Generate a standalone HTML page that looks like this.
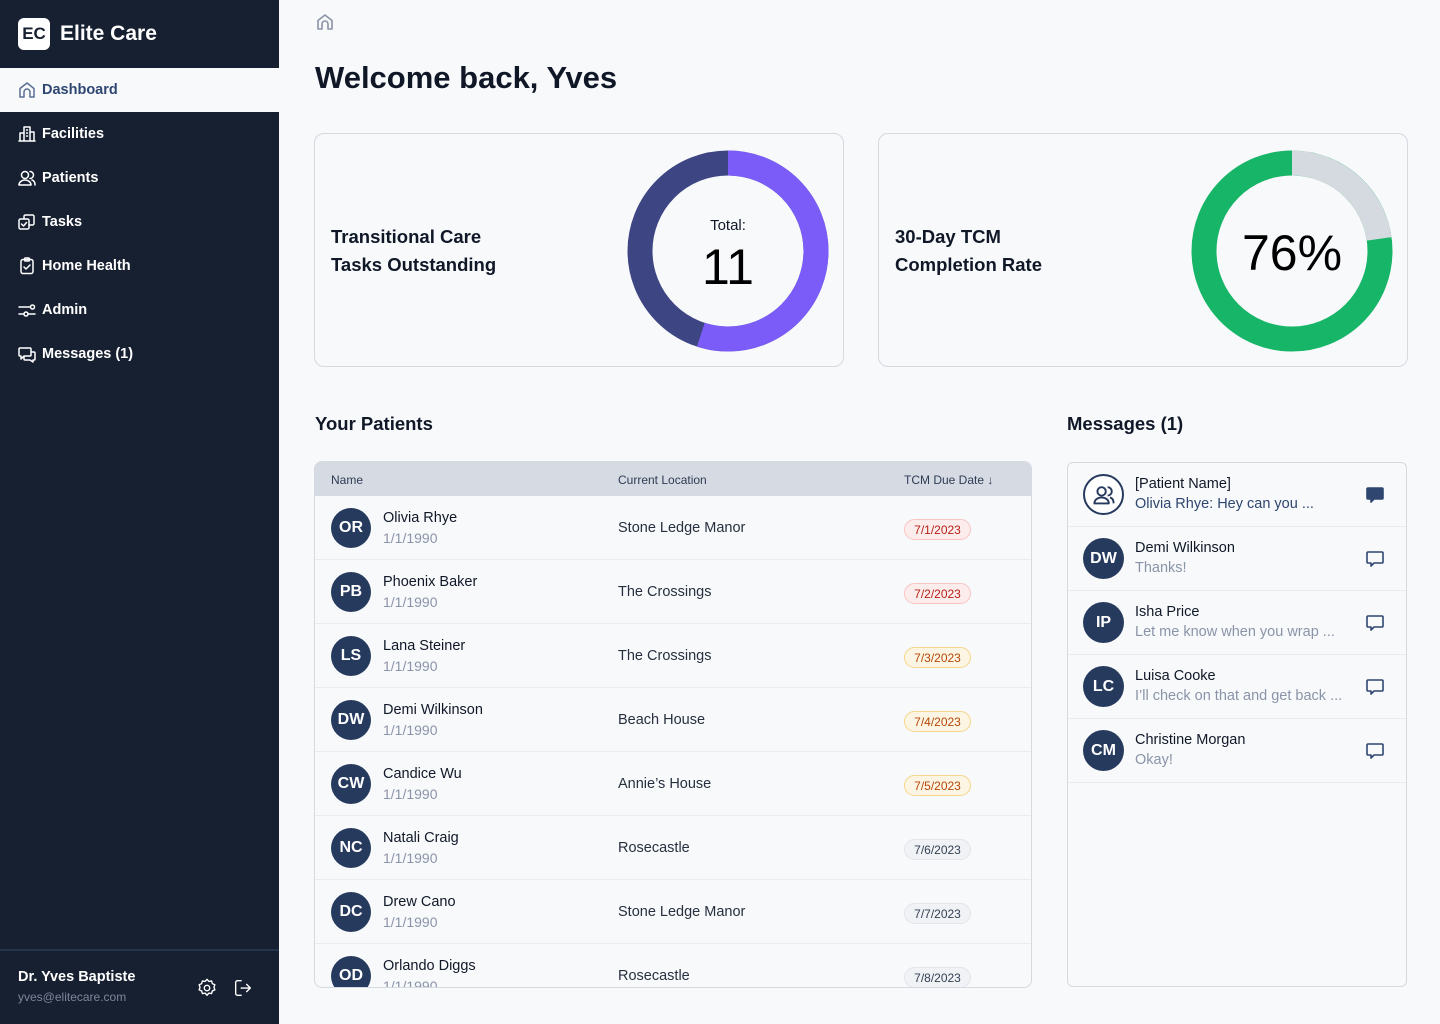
<!DOCTYPE html>
<html><head><meta charset="utf-8"><style>
*{box-sizing:border-box;margin:0;padding:0}
body{width:1440px;height:1024px;overflow:hidden;background:#f8f9fb;font-family:"Liberation Sans",sans-serif;color:#101828;position:relative}
.sb{position:absolute;left:0;top:0;width:279px;height:1024px;background:#172031}
.logo{height:68px;display:flex;align-items:center;padding-left:18px;color:#fff;font-size:21px;font-weight:bold}
.logo .b{width:32px;height:32px;background:#fff;border-radius:6px;color:#172031;font-size:17px;display:flex;align-items:center;justify-content:center;margin-right:10px}
.nav{height:44px;display:flex;align-items:center;padding-left:17px;color:#fff;font-size:14.5px;font-weight:bold}
.nav svg{width:20px;height:20px;margin-right:5px;fill:none;stroke:#fff;stroke-width:1.5;stroke-linecap:round;stroke-linejoin:round}
.nav.act{background:#f8f9fb;color:#2e4670}
.nav.act svg{stroke:#5a6f93}
.foot{position:absolute;left:0;top:949px;width:279px;height:75px;border-top:2px solid #26334d;padding:18px 0 0 18px}
.foot .n{color:#fff;font-size:14.5px;font-weight:bold}
.foot .e{color:#7c879b;font-size:12px;margin-top:5px}
.foot svg{position:absolute;top:26px;width:22px;height:22px;fill:none;stroke:#fff;stroke-width:1.5;stroke-linecap:round;stroke-linejoin:round}
h1{position:absolute;left:315px;top:60px;font-size:31px;font-weight:bold;color:#101828}
.card{position:absolute;top:133px;width:530px;height:234px;border:1px solid #d5d9e0;border-radius:10px;background:#f8f9fb}
.card .t{position:absolute;left:16px;top:89px;font-size:18.5px;font-weight:bold;line-height:28px;color:#101828}
.card svg{position:absolute;top:16px;width:202px;height:202px}
h2{position:absolute;top:413px;font-size:18.5px;font-weight:bold;color:#101828}
.tbl{position:absolute;left:314px;top:461px;width:718px;height:527px;border:1px solid #d5d9e0;border-radius:8px;overflow:hidden;background:#f8f9fb}
.th{height:34px;background:#d6dae2;position:relative;font-size:12px;color:#2e3c55}
.th span,.row span{position:absolute}
.row{height:64px;position:relative;border-bottom:1px solid #eaecf0}
.av{position:absolute;width:40px;height:40px;border-radius:50%;background:#263a5e;color:#fff;font-weight:bold;font-size:16px;display:flex;align-items:center;justify-content:center}
.nm{font-size:14.5px;color:#101828}
.dob{font-size:14px;color:#8a94a8}
.loc{font-size:14.5px;color:#27303f}
.bd{position:absolute;left:589px;top:23px;width:67px;height:21px;border-radius:11px;font-size:12px;display:flex;align-items:center;justify-content:center;border:1px solid}
.r{background:#fdecec;border-color:#f6c5c2;color:#b42318}
.o{background:#fdf5e4;border-color:#f6d68a;color:#b54708}
.g{background:#f0f2f5;border-color:#e2e5ea;color:#344054}
.msg{position:absolute;left:1067px;top:462px;width:340px;height:525px;border:1px solid #d5d9e0;border-radius:6px;background:#f8f9fb;overflow:hidden}
.mr{height:64px;position:relative;border-bottom:1px solid #eaecf0}
.mr .av{left:15px;top:11px;width:41px;height:41px}
.mr .a{position:absolute;left:67px;top:13px;font-size:14.5px;color:#101828}
.mr .b{position:absolute;left:67px;top:33px;font-size:14.5px;color:#8a94a8}
.mr svg{position:absolute;left:297px;top:22px;width:20px;height:20px;fill:none;stroke:#2e4670;stroke-width:1.6;stroke-linejoin:round}
</style></head><body>
<div class="sb">
<div class="logo"><div class="b">EC</div>Elite Care</div>
<div class="nav act"><svg viewBox="0 0 20 20"><path d="M3 17V8.5L10 3l7 5.5V17h-4v-5a3 3 0 0 0-6 0v5z"/></svg>Dashboard</div>
<div class="nav"><svg viewBox="0 0 20 20"><path d="M2 17h16M3 17V9h4M7 17V3h6v14M13 8h4v9M9.5 6h1M9.5 9h1M9.5 12h1"/></svg>Facilities</div>
<div class="nav"><svg viewBox="0 0 20 20"><circle cx="8" cy="7" r="3.5"/><path d="M2 17c0-3 3-5 6-5s6 2 6 5zM13 3.5a3.5 3.5 0 0 1 0 7M15 12c2 .5 3 2.5 3 5"/></svg>Patients</div>
<div class="nav"><svg viewBox="0 0 20 20"><rect x="2" y="7" width="10" height="10" rx="1.5"/><path d="M7 7V4.5A1.5 1.5 0 0 1 8.5 3h7A1.5 1.5 0 0 1 17 4.5v7a1.5 1.5 0 0 1-1.5 1.5H12M4.5 12l2 2 3-3.5"/></svg>Tasks</div>
<div class="nav"><svg viewBox="0 0 20 20"><rect x="4" y="3.5" width="12" height="14" rx="2"/><rect x="7.5" y="2" width="5" height="3" rx="1"/><path d="M7 11l2 2 4-4"/></svg>Home Health</div>
<div class="nav"><svg viewBox="0 0 20 20"><path d="M2 7h11M2 14h5"/><circle cx="15.5" cy="7" r="2"/><circle cx="9" cy="14" r="2"/><path d="M11 14h7"/></svg>Admin</div>
<div class="nav"><svg viewBox="0 0 20 20"><path d="M3 4h10a1 1 0 0 1 1 1v6a1 1 0 0 1-1 1H7l-3 3v-3H3a1 1 0 0 1-1-1V5a1 1 0 0 1 1-1zM14 8h3a1 1 0 0 1 1 1v6a1 1 0 0 1-1 1h-1v2l-3-2H8a1 1 0 0 1-1-1v-2"/></svg>Messages (1)</div>
<div class="foot"><div class="n">Dr. Yves Baptiste</div><div class="e">yves@elitecare.com</div>
<svg style="left:196px" viewBox="0 0 24 24"><circle cx="12" cy="12" r="3"/><path d="M12 2.5l2 2.3 3-.5.8 2.9 2.8 1.2-1 2.8 1 2.8-2.8 1.2-.8 2.9-3-.5-2 2.3-2-2.3-3 .5-.8-2.9-2.8-1.2 1-2.8-1-2.8 2.8-1.2.8-2.9 3 .5z"/></svg>
<svg style="left:232px" viewBox="0 0 24 24"><path d="M10 4H6a2 2 0 0 0-2 2v12a2 2 0 0 0 2 2h4M10 12h10M16 8l4 4-4 4"/></svg></div>
</div>
<svg style="position:absolute;left:315px;top:12px;width:20px;height:20px;fill:none;stroke:#8a94a8;stroke-width:1.6;stroke-linejoin:round" viewBox="0 0 20 20"><path d="M3 17V8.5L10 3l7 5.5V17h-4v-5a3 3 0 0 0-6 0v5z"/></svg>
<h1>Welcome back, Yves</h1>
<div class="card" style="left:314px"><div class="t">Transitional Care<br>Tasks Outstanding</div>
<svg style="left:312px" viewBox="0 0 202 202"><circle cx="101" cy="101" r="88" fill="none" stroke="#3d4582" stroke-width="25"/><circle cx="101" cy="101" r="88" fill="none" stroke="#7b5cf8" stroke-width="25" stroke-dasharray="304 600" transform="rotate(-90 101 101)"/><text x="101" y="80" text-anchor="middle" font-size="15" fill="#101828" font-family="Liberation Sans">Total:</text><text x="101" y="134" text-anchor="middle" font-size="50" fill="#000" font-family="Liberation Sans">11</text></svg></div>
<div class="card" style="left:878px"><div class="t">30-Day TCM<br>Completion Rate</div>
<svg style="left:312px" viewBox="0 0 202 202"><circle cx="101" cy="101" r="88" fill="none" stroke="#17b567" stroke-width="25"/><circle cx="101" cy="101" r="88" fill="none" stroke="#d5d9e0" stroke-width="25" stroke-dasharray="126 600" transform="rotate(-90 101 101)"/><text x="101" y="120" text-anchor="middle" font-size="50" fill="#000" font-family="Liberation Sans">76%</text></svg></div>
<h2 style="left:315px">Your Patients</h2>
<h2 style="left:1067px">Messages (1)</h2>
<div class="tbl">
<div class="th"><span style="left:16px;top:11px">Name</span><span style="left:303px;top:11px">Current Location</span><span style="left:589px;top:11px">TCM Due Date ↓</span></div>
<div class="row"><div class="av" style="left:16px;top:12px">OR</div><span class="nm" style="left:68px;top:14px">Olivia Rhye</span><span class="dob" style="left:68px;top:34px">1/1/1990</span><span class="loc" style="left:303px;top:24px">Stone Ledge Manor</span><div class="bd r">7/1/2023</div></div>
<div class="row"><div class="av" style="left:16px;top:12px">PB</div><span class="nm" style="left:68px;top:14px">Phoenix Baker</span><span class="dob" style="left:68px;top:34px">1/1/1990</span><span class="loc" style="left:303px;top:24px">The Crossings</span><div class="bd r">7/2/2023</div></div>
<div class="row"><div class="av" style="left:16px;top:12px">LS</div><span class="nm" style="left:68px;top:14px">Lana Steiner</span><span class="dob" style="left:68px;top:34px">1/1/1990</span><span class="loc" style="left:303px;top:24px">The Crossings</span><div class="bd o">7/3/2023</div></div>
<div class="row"><div class="av" style="left:16px;top:12px">DW</div><span class="nm" style="left:68px;top:14px">Demi Wilkinson</span><span class="dob" style="left:68px;top:34px">1/1/1990</span><span class="loc" style="left:303px;top:24px">Beach House</span><div class="bd o">7/4/2023</div></div>
<div class="row"><div class="av" style="left:16px;top:12px">CW</div><span class="nm" style="left:68px;top:14px">Candice Wu</span><span class="dob" style="left:68px;top:34px">1/1/1990</span><span class="loc" style="left:303px;top:24px">Annie’s House</span><div class="bd o">7/5/2023</div></div>
<div class="row"><div class="av" style="left:16px;top:12px">NC</div><span class="nm" style="left:68px;top:14px">Natali Craig</span><span class="dob" style="left:68px;top:34px">1/1/1990</span><span class="loc" style="left:303px;top:24px">Rosecastle</span><div class="bd g">7/6/2023</div></div>
<div class="row"><div class="av" style="left:16px;top:12px">DC</div><span class="nm" style="left:68px;top:14px">Drew Cano</span><span class="dob" style="left:68px;top:34px">1/1/1990</span><span class="loc" style="left:303px;top:24px">Stone Ledge Manor</span><div class="bd g">7/7/2023</div></div>
<div class="row"><div class="av" style="left:16px;top:12px">OD</div><span class="nm" style="left:68px;top:14px">Orlando Diggs</span><span class="dob" style="left:68px;top:34px">1/1/1990</span><span class="loc" style="left:303px;top:24px">Rosecastle</span><div class="bd g">7/8/2023</div></div>
</div>
<div class="msg">
<div class="mr"><div class="av" style="background:#fff;border:2px solid #263a5e"><svg style="position:static;width:24px;height:24px;stroke:#263a5e" viewBox="0 0 20 20"><circle cx="8" cy="7" r="3.5"/><path d="M2 17c0-3 3-5 6-5s6 2 6 5zM13 3.5a3.5 3.5 0 0 1 0 7M15 12c2 .5 3 2.5 3 5"/></svg></div><span class="a">[Patient Name]</span><span class="b" style="color:#2e4670">Olivia Rhye: Hey can you ...</span><svg viewBox="0 0 20 20" style="fill:#2e4670"><path d="M3 3h14a1 1 0 0 1 1 1v9a1 1 0 0 1-1 1H9l-3 3v-3H3a1 1 0 0 1-1-1V4a1 1 0 0 1 1-1z"/></svg></div>
<div class="mr"><div class="av">DW</div><span class="a">Demi Wilkinson</span><span class="b">Thanks!</span><svg viewBox="0 0 20 20"><path d="M3 3h14a1 1 0 0 1 1 1v9a1 1 0 0 1-1 1H9l-3 3v-3H3a1 1 0 0 1-1-1V4a1 1 0 0 1 1-1z"/></svg></div>
<div class="mr"><div class="av">IP</div><span class="a">Isha Price</span><span class="b">Let me know when you wrap ...</span><svg viewBox="0 0 20 20"><path d="M3 3h14a1 1 0 0 1 1 1v9a1 1 0 0 1-1 1H9l-3 3v-3H3a1 1 0 0 1-1-1V4a1 1 0 0 1 1-1z"/></svg></div>
<div class="mr"><div class="av">LC</div><span class="a">Luisa Cooke</span><span class="b">I’ll check on that and get back ...</span><svg viewBox="0 0 20 20"><path d="M3 3h14a1 1 0 0 1 1 1v9a1 1 0 0 1-1 1H9l-3 3v-3H3a1 1 0 0 1-1-1V4a1 1 0 0 1 1-1z"/></svg></div>
<div class="mr"><div class="av">CM</div><span class="a">Christine Morgan</span><span class="b">Okay!</span><svg viewBox="0 0 20 20"><path d="M3 3h14a1 1 0 0 1 1 1v9a1 1 0 0 1-1 1H9l-3 3v-3H3a1 1 0 0 1-1-1V4a1 1 0 0 1 1-1z"/></svg></div>
</div>
</body></html>
